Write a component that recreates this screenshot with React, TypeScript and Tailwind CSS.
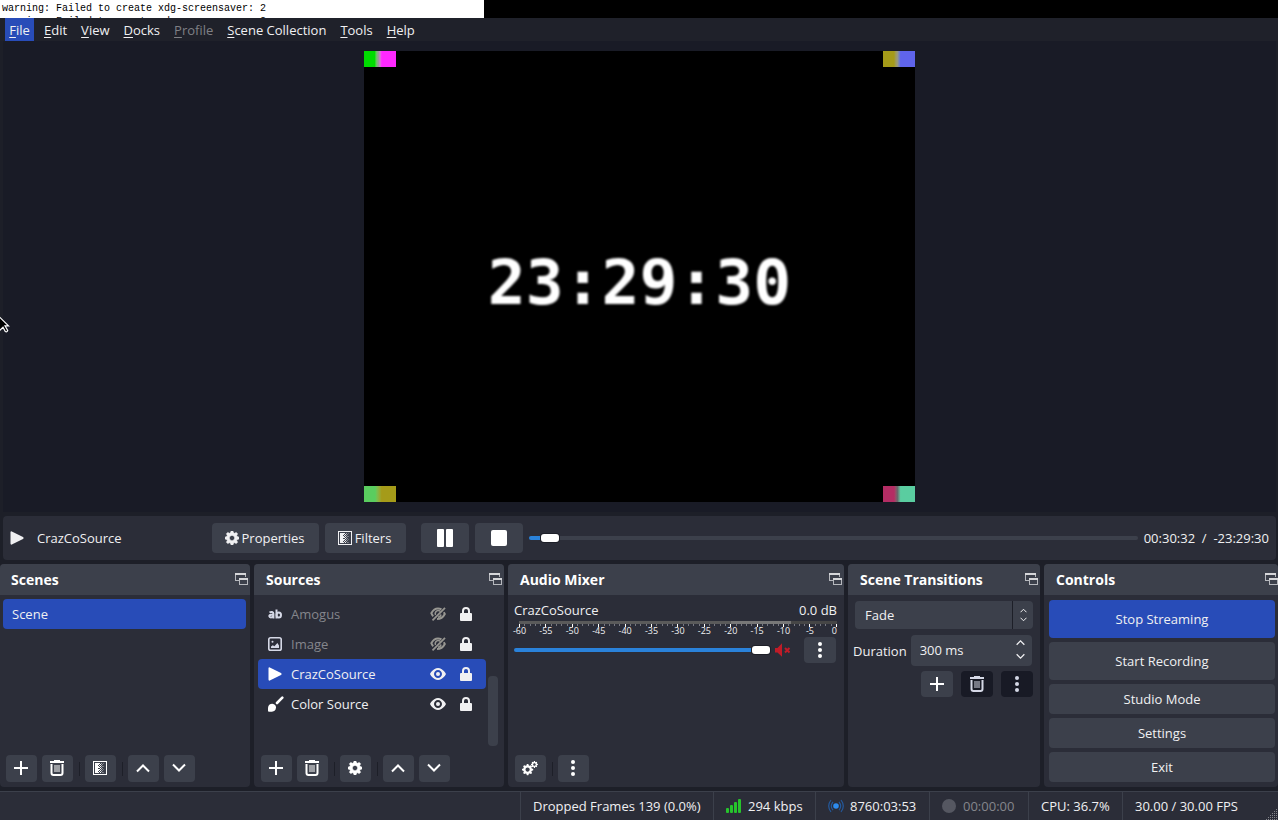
import { useState } from 'react';
import type { ReactNode } from 'react';

type IconProps = { className?: string };

const MENU_ITEMS = [
  { label: 'File', active: true },
  { label: 'Edit' },
  { label: 'View' },
  { label: 'Docks' },
  { label: 'Profile', disabled: true },
  { label: 'Scene Collection' },
  { label: 'Tools' },
  { label: 'Help' },
];

const METER_LABELS = ['-60', '-55', '-50', '-45', '-40', '-35', '-30', '-25', '-20', '-15', '-10', '-5', '0'];

const COG_PATH =
  'M3.5 0l-.5 1.19c-.1.03-.19.08-.28.13l-1.19-.5-.72.72.5 1.19c-.05.1-.09.18-.13.28l-1.19.5v1l1.19.5c.04.1.08.18.13.28l-.5 1.19.72.72 1.19-.5c.09.04.18.09.28.13l.5 1.19h1l.5-1.19c.09-.04.19-.08.28-.13l1.19.5.72-.72-.5-1.19c.04-.09.09-.19.13-.28l1.19-.5v-1l-1.19-.5c-.03-.09-.08-.19-.13-.28l.5-1.19-.72-.72-1.19.5c-.09-.04-.19-.09-.28-.13l-.5-1.19h-1zm.5 2.5c.83 0 1.5.67 1.5 1.5s-.67 1.5-1.5 1.5-1.5-.67-1.5-1.5.67-1.5 1.5-1.5z';

/* Icons */

function CogIcon() {
  return (
    <svg className="h-[14px] w-[14px]" viewBox="0 0 8 8" fill="currentColor" stroke="currentColor" strokeWidth="0.3" strokeLinejoin="round">
      <path d={COG_PATH} />
    </svg>
  );
}

function CogsIcon() {
  return (
    <svg className="h-4 w-4" viewBox="0 0 16 16" fill="currentColor">
      <path transform="translate(0 4) scale(1.4)" d={COG_PATH} />
      <path transform="translate(9 1) scale(0.86)" d={COG_PATH} />
    </svg>
  );
}

function PlusIcon() {
  return (
    <svg className="h-[14px] w-[14px]" viewBox="0 0 14 14" stroke="currentColor" strokeWidth="2">
      <path d="M7 0v14M0 7h14" />
    </svg>
  );
}

function TrashIcon() {
  return (
    <svg className="h-4 w-4" viewBox="0 0 16 16" fill="none" stroke="currentColor">
      <path d="M5 .5h6" strokeWidth="1" />
      <path d="M1 2h14" strokeWidth="2" />
      <path d="M2.500 4v9q0 2 2 2h7q2 0 2-2V4" strokeWidth="2" />
      <path d="M6 5v7M8 5v7M10 5v7" strokeWidth="1" />
    </svg>
  );
}

function FilterIcon() {
  return (
    <svg className="h-[14px] w-[14px]" viewBox="0 0 14 14" fill="none" stroke="currentColor" shapeRendering="crispEdges">
      <rect x="0.5" y="0.5" width="13" height="13" />
      <path d="M2 2h3v10H2z" fill="currentColor" stroke="none" />
      <path d="M5.5 2v10" strokeDasharray="2 1" />
      <path d="M6.5 2v10M7.5 3v9" strokeDasharray="1 1" />
      <path d="M8.5 2v10" strokeDasharray="1 1" opacity="0.6" />
      <path d="M9.5 3v9" strokeDasharray="1 1" opacity="0.4" />
      <path d="M10.5 2v10" strokeDasharray="1 2" opacity="0.3" />
    </svg>
  );
}

function ChevronIcon({ down, className = 'h-[14px] w-[14px]' }: IconProps & { down?: boolean }) {
  return (
    <svg className={className} viewBox="0 0 14 14" fill="none" stroke="currentColor" strokeWidth="2">
      <path d={down ? 'M1 3.5l6 6 6-6' : 'M1 10.5l6-6 6 6'} />
    </svg>
  );
}

function DotsIcon() {
  return (
    <svg className="h-4 w-4" viewBox="0 0 16 16" fill="currentColor">
      <circle cx="8" cy="2" r="2" />
      <circle cx="8" cy="8" r="2" />
      <circle cx="8" cy="14" r="2" />
    </svg>
  );
}

function PlayIcon() {
  return (
    <svg className="h-[14px] w-[14px]" viewBox="0 0 14 14" fill="currentColor">
      <path d="M.5 1.400Q.5 0 1.800.4L13 6.100q1.200.9 0 1.800L1.800 13.600Q.5 14 .5 12.600z" />
    </svg>
  );
}

function TextIcon() {
  return (
    <svg className="h-[14px] w-[14px]" viewBox="0 0 14 14" fill="none" stroke="currentColor" strokeWidth="2">
      <path d="M1.500 5.500q1.200-.8 2.600-.5 1.300.4 1.300 1.700v4.800" />
      <path d="M5 7.700H3.200Q1.300 7.900 1.300 9.200q.2 1.300 1.600 1.300 1.500 0 2.300-1.200" />
      <path d="M8.500 2.500v9" />
      <ellipse cx="10.800" cy="8" rx="2.200" ry="2.500" />
    </svg>
  );
}

function ImageIcon() {
  return (
    <svg className="h-[14px] w-[14px]" viewBox="0 0 14 14" fill="none" stroke="currentColor">
      <rect x="0.8" y="0.8" width="12.4" height="12.4" rx="1.8" strokeWidth="1.6" />
      <circle cx="4.5" cy="4.8" r="1" fill="currentColor" stroke="none" />
      <path d="M3 11V9.6l1.8-1.4 1.6 1L9.4 6 11 8.4V11z" fill="currentColor" stroke="none" />
    </svg>
  );
}

function BrushIcon() {
  return (
    <svg className="h-4 w-4" viewBox="0 0 16 16" fill="currentColor">
      <path d="M9 7l5.300-5.300" fill="none" stroke="currentColor" strokeWidth="2.600" strokeLinecap="round" />
      <path d="M4.300 7.800Q8 8.200 8 11.600q-.2 4-4.200 4.100H1Q0 15.700 0 14.700V11.800Q.5 8 4.300 7.800z" />
    </svg>
  );
}

function EyeIcon() {
  return (
    <svg className="h-3 w-4" viewBox="0 0 8 6" fill="currentColor">
      <path d="M4.030 0C1.500 0 0 3 0 3s1.500 3 4.030 3C6.500 6 8 3 8 3S6.500 0 4.030 0zM4 1c1.110 0 2 .9 2 2 0 1.110-.89 2-2 2-1.100 0-2-.89-2-2 0-1.100.9-2 2-2z" />
      <circle cx="4" cy="3" r="1" />
    </svg>
  );
}

function EyeOffIcon() {
  return (
    <svg className="h-[14px] w-4 text-[#979691]" viewBox="0 0 16 14" fill="none" stroke="currentColor">
      <path d="M11.500 2.300Q5-.2 1.300 6.200q.8 2 2 3" strokeWidth="2" />
      <path d="M13.800 5.300l1 1.700q-2.500 5-7.800 5" strokeWidth="2" />
      <path d="M10.500 4.300Q7.500 2.600 5.700 5q-.9 1.500-.2 3" strokeWidth="1.500" />
      <path d="M15 .8L2.500 13.300" strokeWidth="1.800" />
      <path d="M11 7.500Q10.500 10 8 10.300" strokeWidth="1.500" />
    </svg>
  );
}

function LockIcon() {
  return (
    <svg className="h-[14px] w-3" viewBox="0 0 12 14" fill="none" stroke="currentColor">
      <path d="M3 7V4q0-3 3-3t3 3v3" strokeWidth="2" />
      <rect x="0" y="6" width="12" height="8" rx="1" fill="currentColor" stroke="none" />
    </svg>
  );
}

function MutedIcon() {
  return (
    <svg className="h-[14px] w-4 text-[#c01c28]" viewBox="0 0 16 14" fill="currentColor">
      <path d="M0 5h2.500L7 .3v13.400L2.500 9.500H0z" />
      <path d="M10 5l4.500 4.500M14.500 5L10 9.500" stroke="currentColor" strokeWidth="2" />
    </svg>
  );
}

function PopOutIcon() {
  return (
    <svg className="h-[13px] w-[13px] text-[#d5d6d9]" viewBox="0 0 13 13" fill="none" stroke="currentColor" shapeRendering="crispEdges">
      <path d="M0 1h11" strokeWidth="2" />
      <path d="M.5 1v6.500H4M10.500 2v2" opacity="0.8" />
      <path d="M4 6h9" strokeWidth="2" />
      <path d="M4.500 6v5.500h8V6" opacity="0.8" />
    </svg>
  );
}

function SignalIcon() {
  return (
    <svg className="h-[14px] w-[15px] text-[#26c42c]" viewBox="0 0 15 14" fill="currentColor">
      <rect x="0" y="9" width="3" height="5" rx="1" />
      <rect x="4" y="6" width="3" height="8" rx="1" />
      <rect x="8" y="3" width="3" height="11" rx="1" />
      <rect x="12" y="0" width="3" height="14" rx="1" />
    </svg>
  );
}

function BroadcastIcon() {
  return (
    <svg className="h-[14px] w-4" viewBox="0 0 16 14" fill="none" stroke="#24599c">
      <circle cx="8" cy="7" r="2.800" fill="#2d8cf0" stroke="none" />
      <path d="M5 2.800q-3.400 4.200 0 8.400M11 2.800q3.400 4.200 0 8.400" strokeWidth="1.200" />
      <path d="M3 1q-4.600 6 0 12M13 1q4.600 6 0 12" strokeWidth="1.200" />
    </svg>
  );
}

function ResizeGrip() {
  return (
    <svg className="absolute right-0 bottom-0 h-3 w-3" viewBox="0 0 12 12" fill="none" stroke="#85868c" strokeWidth="1" strokeDasharray="1 1">
      <path d="M10 1.500h2M8 3.500h4M6 5.500h6M4 7.500h8M2 9.500h10M0 11.500h12" />
    </svg>
  );
}

function MouseCursor() {
  return (
    <svg className="absolute top-[316px] left-0 h-[18px] w-[10px]" viewBox="0 0 10 18" fill="#000" stroke="#fff" strokeWidth="1.200">
      <path d="M-1 .5L8.500 9.800H5L7.700 14.500q-.8 2-2.400 1L3 11.300l-4 3.700z" />
    </svg>
  );
}

/* Building blocks */

function ToolButton({ label, dark, wide, children }: { label: string; dark?: boolean; wide?: boolean; children: ReactNode }) {
  return (
    <button
      type="button"
      aria-label={label}
      className={`flex items-center justify-center rounded ${wide ? 'h-[26px] w-8' : 'h-[27px] w-[31px] pr-px pb-px'} ${
        dark ? 'bg-[#181a25] text-[#d5d8e6]' : 'bg-[#3c404b] text-white'
      }`}
    >
      {children}
    </button>
  );
}

function Separator() {
  return <span className="ml-px h-[14px] w-px bg-[#1d1f28]" />;
}

function Dock({ title, edge, children }: { title: string; edge?: 'left' | 'right'; children: ReactNode }) {
  return (
    <section className="flex min-w-0 flex-col overflow-hidden rounded bg-[#2b2d38]">
      <header
        className={`flex h-[31px] items-center justify-between bg-[#3c404b] ${edge === 'left' ? 'pl-[11px]' : 'pl-3'} ${
          edge === 'right' ? '' : 'pr-[2px]'
        }`}
      >
        <h2 className="text-[14px] font-bold text-white">{title}</h2>
        <button type="button" aria-label={`Float ${title}`}>
          <PopOutIcon />
        </button>
      </header>
      {children}
    </section>
  );
}

function Corner({ place, colors }: { place: string; colors: string }) {
  return <span className={`absolute h-4 w-8 bg-linear-to-r ${place} ${colors}`} />;
}

function SourceRow({ icon, name, hidden, selected }: { icon: ReactNode; name: string; hidden?: boolean; selected?: boolean }) {
  return (
    <li className={`flex h-[30px] items-center rounded pr-[14px] pl-[10px] ${selected ? 'bg-[#284cb8]' : ''}`}>
      <span className={`flex w-[23px] items-center ${hidden ? 'text-[#d5d8e6]' : 'text-white'}`}>{icon}</span>
      <span className={`flex-1 ${hidden ? 'text-[#85868c]' : 'text-[#f0f0f2]'}`}>{name}</span>
      <button type="button" aria-label={`Toggle visibility of ${name}`} className="mr-[14px]">
        {hidden ? <EyeOffIcon /> : <EyeIcon />}
      </button>
      <button type="button" aria-label={`Toggle lock of ${name}`}>
        <LockIcon />
      </button>
    </li>
  );
}

function Slider({ label, initial }: { label: string; initial: number }) {
  const [value, setValue] = useState(initial);
  return (
    <input
      type="range"
      min={0}
      max={1000}
      value={value}
      aria-label={label}
      onChange={(e) => setValue(Number(e.target.value))}
      className="h-1 min-w-0 flex-1 appearance-none rounded-sm [&::-webkit-slider-thumb]:h-2 [&::-webkit-slider-thumb]:w-[18px] [&::-webkit-slider-thumb]:appearance-none [&::-webkit-slider-thumb]:rounded-[3px] [&::-webkit-slider-thumb]:bg-white [&::-webkit-slider-thumb]:shadow-[0_0_0_1px_#1d1f28]"
      style={{ background: `linear-gradient(to right, #2a82da ${value / 10}%, #3c404b ${value / 10}%)` }}
    />
  );
}

function VolumeMeter() {
  return (
    <div className="ml-[5px]">
      <div className="flex h-[3px] bg-[#464646]">
        <span className="w-2/3 bg-[#5a5a5a]" />
        <span className="w-[19%] bg-[#777777]" />
      </div>
      <div className="flex h-[3px] justify-between">
        {Array.from({ length: 61 }, (_, i) => (
          <span key={i} className={`w-px ${i % 5 === 0 ? 'h-[3px] bg-white' : 'h-[2px] bg-[#777882]'}`} />
        ))}
      </div>
      <div className="flex h-2 justify-between text-[9px] leading-[8px]">
        {METER_LABELS.map((label) => (
          <span key={label} className={`flex w-px ${label === '0' ? 'justify-end' : 'justify-center'}`}>
            {label}
          </span>
        ))}
      </div>
    </div>
  );
}

function ControlButton({ children, primary, tall }: { children: string; primary?: boolean; tall?: boolean }) {
  return (
    <button
      type="button"
      className={`w-full rounded ${tall ? 'h-[38px]' : 'h-[30px]'} ${primary ? 'bg-[#284cb8]' : 'bg-[#3c404b]'}`}
    >
      {children}
    </button>
  );
}

function StatusItem({ width, muted, children }: { width: string; muted?: boolean; children: ReactNode }) {
  return (
    <div className={`flex items-center border-l border-[#3c404b] pl-3 ${width} ${muted ? 'text-[#85868c]' : ''}`}>
      {children}
    </div>
  );
}

export default function App() {
  const [duration, setDuration] = useState('300 ms');

  return (
    <div className="relative flex min-h-screen flex-col bg-[#1d1f28] font-['Open_Sans','Noto_Sans',sans-serif] text-[13px] leading-[18px] text-[#f0f0f2]">
      {/* Terminal behind the window */}
      <div className="flex h-[18px] bg-black">
        <pre className="w-[484px] overflow-hidden bg-white pt-[2px] pl-[2px] font-['Liberation_Mono',monospace] text-[10px] leading-[13px] text-black">
          {'warning: Failed to create xdg-screensaver: 2\nwarning: Failed to create xdg-screensaver: 2'}
        </pre>
      </div>

      <nav className="flex h-[23px] gap-[6px] bg-[#1f212a] pl-[5px]">
        {MENU_ITEMS.map((item) => (
          <button
            key={item.label}
            type="button"
            disabled={item.disabled}
            className={`px-1 ${item.active ? 'w-[29px] bg-[#284cb8]' : ''} ${item.disabled ? 'text-[#7f8085]' : ''}`}
          >
            <u className="underline-offset-2">{item.label[0]}</u>
            {item.label.slice(1)}
          </button>
        ))}
      </nav>

      {/* Preview */}
      <main className="mr-[2px] ml-[3px] flex flex-1 items-center justify-center bg-[#191b26] py-[10px]">
        <div className="relative flex h-[451px] w-[551px] items-center justify-center bg-black pt-3">
          <Corner place="top-0 left-0" colors="from-[#00dc00] from-35% via-[#999999] via-45% to-[#ff28ff] to-55%" />
          <Corner place="top-0 right-0" colors="from-[#a59b19] from-35% via-[#999980] via-45% to-[#5f64eb] to-55%" />
          <Corner place="bottom-0 left-0" colors="from-[#5acd5f] from-35% to-[#a59b19] to-55%" />
          <Corner place="bottom-0 right-0" colors="from-[#b42d64] from-35% via-[#66666c] via-45% to-[#5acda0] to-55%" />
          <time className="font-['DejaVu_Sans_Mono',monospace] text-[63px] leading-[64px] font-bold text-white blur-[1px]">
            23:29:30
          </time>
        </div>
      </main>

      {/* Source toolbar */}
      <div className="mt-1 mr-[2px] mb-1 ml-[3px] flex h-11 items-center rounded bg-[#2b2d38] pr-[7px] pl-[7px]">
        <PlayIcon />
        <span className="ml-[13px] w-[175px]">CrazCoSource</span>
        <button type="button" className="flex h-[30px] w-[107px] items-center justify-center gap-[3px] rounded bg-[#3c404b] pr-[2px]">
          <CogIcon />
          Properties
        </button>
        <button type="button" className="ml-[6px] flex h-[30px] w-[81px] items-center justify-center gap-[3px] rounded bg-[#3c404b] pr-[2px]">
          <FilterIcon />
          Filters
        </button>
        <button type="button" aria-label="Pause" className="ml-[15px] flex h-[30px] w-12 items-center justify-center gap-[2px] rounded bg-[#3c404b]">
          <span className="h-[18px] w-[7px] rounded-[1px] bg-white" />
          <span className="h-[18px] w-[7px] rounded-[1px] bg-white" />
        </button>
        <button type="button" aria-label="Stop" className="mx-[6px] flex h-[30px] w-12 items-center justify-center rounded bg-[#3c404b]">
          <span className="h-4 w-4 rounded-[2px] bg-white" />
        </button>
        <Slider label="Media position" initial={21} />
        <span className="ml-[6px] whitespace-pre">{'00:30:32  /  -23:29:30'}</span>
      </div>

      {/* Docks */}
      <div className="grid h-[223px] grid-cols-[250fr_250fr_336fr_192fr_234fr] gap-1">
        <Dock title="Scenes" edge="left">
          <ul className="flex-1 pt-1 pr-1 pl-[3px]">
            <li className="flex h-[30px] items-center rounded bg-[#284cb8] pl-[9px]">Scene</li>
          </ul>
          <div className="flex items-center gap-[5px] pb-[5px] pl-[6px]">
            <ToolButton label="Add scene"><PlusIcon /></ToolButton>
            <ToolButton label="Remove scene"><TrashIcon /></ToolButton>
            <Separator />
            <ToolButton label="Scene filters"><FilterIcon /></ToolButton>
            <Separator />
            <ToolButton label="Move scene up"><ChevronIcon /></ToolButton>
            <ToolButton label="Move scene down"><ChevronIcon down /></ToolButton>
          </div>
        </Dock>

        <Dock title="Sources">
          <div className="flex flex-1 gap-[2px] pt-1 pr-[6px] pl-1">
            <ul className="flex-1">
              <SourceRow icon={<TextIcon />} name="Amogus" hidden />
              <SourceRow icon={<ImageIcon />} name="Image" hidden />
              <SourceRow icon={<PlayIcon />} name="CrazCoSource" selected />
              <SourceRow icon={<BrushIcon />} name="Color Source" />
            </ul>
            <div className="mb-[9px] flex w-[10px] items-end">
              <span className="h-[70px] w-full rounded-sm bg-[#3c404b]" />
            </div>
          </div>
          <div className="flex items-center gap-[5px] pb-[5px] pl-[7px]">
            <ToolButton label="Add source"><PlusIcon /></ToolButton>
            <ToolButton label="Remove source"><TrashIcon /></ToolButton>
            <Separator />
            <ToolButton label="Source properties"><CogIcon /></ToolButton>
            <Separator />
            <ToolButton label="Move source up"><ChevronIcon /></ToolButton>
            <ToolButton label="Move source down"><ChevronIcon down /></ToolButton>
          </div>
        </Dock>

        <Dock title="Audio Mixer">
          <div className="flex-1 pt-[6px] pr-[7px] pl-[6px]">
            <div className="flex h-5 justify-between">
              <span>CrazCoSource</span>
              <span>0.0 dB</span>
            </div>
            <VolumeMeter />
            <div className="mt-[2px] mr-px flex h-[26px] items-center">
              <Slider label="Volume" initial={998} />
              <button type="button" aria-label="Unmute" className="mr-[13px] ml-[5px]">
                <MutedIcon />
              </button>
              <ToolButton label="Audio source options" wide><DotsIcon /></ToolButton>
            </div>
          </div>
          <div className="flex items-center gap-[5px] pb-[5px] pl-[7px]">
            <ToolButton label="Advanced audio properties"><CogsIcon /></ToolButton>
            <Separator />
            <ToolButton label="Audio mixer menu"><DotsIcon /></ToolButton>
          </div>
        </Dock>

        <Dock title="Scene Transitions">
          <div className="flex flex-col pt-[6px] pr-[7px] pl-[5px]">
            <div className="relative ml-[2px] flex h-7">
              <select aria-label="Transition" className="w-full appearance-none rounded bg-[#3c404b] pl-[10px]">
                <option>Fade</option>
              </select>
              <span className="pointer-events-none absolute inset-y-0 right-0 flex w-[21px] flex-col items-center justify-center gap-[2px] border-l border-[#1d1f28]">
                <ChevronIcon className="h-[7px] w-[7px]" />
                <ChevronIcon down className="h-[7px] w-[7px]" />
              </span>
            </div>
            <div className="mt-[6px] mr-px flex h-[31px] items-center gap-1">
              <label htmlFor="duration">Duration</label>
              <div className="flex h-full min-w-0 flex-1 rounded bg-[#3c404b] pb-[2px]">
                <input
                  id="duration"
                  value={duration}
                  onChange={(e) => setDuration(e.target.value)}
                  className="w-full min-w-0 flex-1 bg-transparent pl-[9px]"
                />
                <div className="flex w-6 flex-col items-center justify-around">
                  <button type="button" aria-label="Increase duration"><ChevronIcon className="h-[9px] w-[9px]" /></button>
                  <button type="button" aria-label="Decrease duration"><ChevronIcon down className="h-[9px] w-[9px]" /></button>
                </div>
              </div>
            </div>
            <div className="mt-[5px] flex justify-end gap-2">
              <ToolButton label="Add transition" wide><PlusIcon /></ToolButton>
              <ToolButton label="Remove transition" wide dark><TrashIcon /></ToolButton>
              <ToolButton label="Transition properties" wide dark><DotsIcon /></ToolButton>
            </div>
          </div>
        </Dock>

        <Dock title="Controls" edge="right">
          <div className="flex flex-col gap-1 pt-[5px] pr-[3px] pl-[5px]">
            <ControlButton primary tall>Stop Streaming</ControlButton>
            <ControlButton tall>Start Recording</ControlButton>
            <ControlButton>Studio Mode</ControlButton>
            <ControlButton>Settings</ControlButton>
            <ControlButton>Exit</ControlButton>
          </div>
        </Dock>
      </div>

      <footer className="relative mt-1 flex h-[29px] justify-end border-t border-[#3c404b] bg-[#2b2d38]">
        <StatusItem width="w-[193px]">Dropped Frames 139 (0.0%)</StatusItem>
        <StatusItem width="w-[102px]">
          <SignalIcon />
          <span className="ml-[7px]">294 kbps</span>
        </StatusItem>
        <StatusItem width="w-[114px]">
          <BroadcastIcon />
          <span className="ml-[6px]">8760:03:53</span>
        </StatusItem>
        <StatusItem width="w-[99px]" muted>
          <span className="mr-[7px] h-[14px] w-[14px] rounded-full bg-[#555761]" />
          00:00:00
        </StatusItem>
        <StatusItem width="w-[94px]">CPU: 36.7%</StatusItem>
        <StatusItem width="w-[156px]">30.00 / 30.00 FPS</StatusItem>
        <ResizeGrip />
      </footer>

      <MouseCursor />
    </div>
  );
}
